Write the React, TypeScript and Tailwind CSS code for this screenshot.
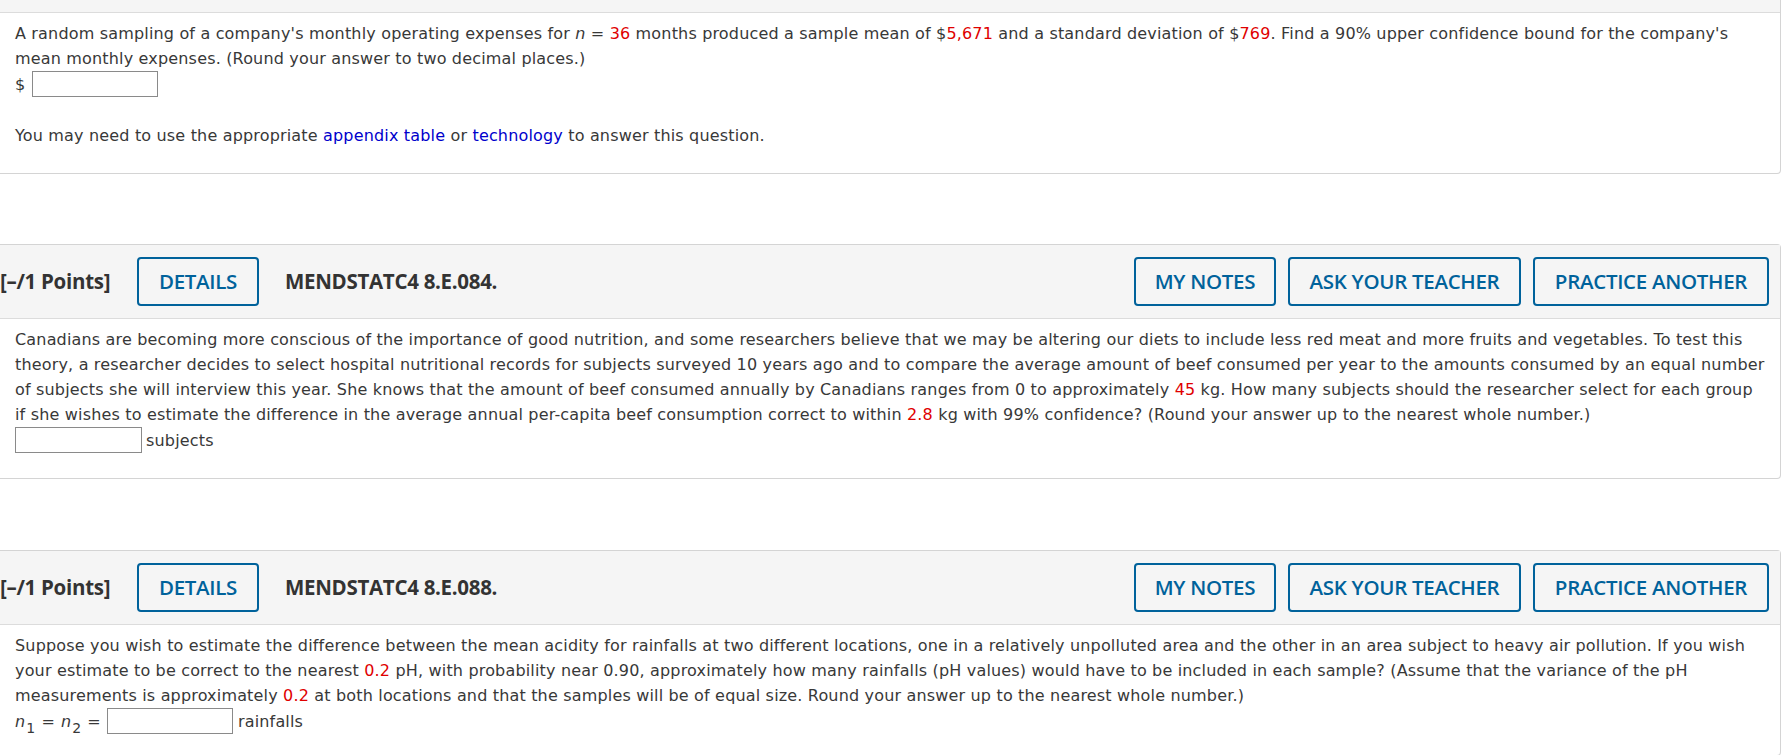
import type { ReactNode } from 'react'

const btn =
  'h-[49px] shrink-0 rounded-[4px] border-2 border-[#00629b] text-[20.5px] font-semibold text-[#00629b] tracking-[-0.3px]'

function Header({ code }: { code: string }) {
  return (
    <div className="flex h-[74px] items-center border-b border-[#dcdcdc] bg-[#f5f5f5] pr-[11px] font-['Open_Sans',sans-serif]">
      <span className="w-[137px] shrink-0 text-[20.5px] font-bold text-[#333] tracking-[-0.3px]">[–/1 Points]</span>
      <button className={btn + ' w-[122px]'}>DETAILS</button>
      <span className="ml-[26px] text-[20.5px] font-bold text-[#333] tracking-[-0.3px]">{code}</span>
      <div className="ml-auto flex gap-[12px]">
        <button className={btn + ' w-[142px]'}>MY NOTES</button>
        <button className={btn + ' w-[233px]'}>ASK YOUR TEACHER</button>
        <button className={btn + ' w-[236px]'}>PRACTICE ANOTHER</button>
      </div>
    </div>
  )
}

function Card({ code, children, className }: { code: string; children: ReactNode; className?: string }) {
  return (
    <div className={'w-[1781px] rounded-br-[4px] rounded-tr-[4px] border border-l-0 border-[#d4d4d4] ' + (className ?? '')}>
      <Header code={code} />
      <div className="whitespace-nowrap pl-[15px] pr-[20px] pt-[8px] font-['DejaVu_Sans',sans-serif] text-[16px] leading-[25px] tracking-[0.17px] text-[#383838]">
        {children}
      </div>
    </div>
  )
}

const Red = ({ children }: { children: ReactNode }) => <span className="text-[#e00000]">{children}</span>
const N = () => <i>n</i>

const Box = ({ w }: { w: string }) => (
  <span className={'inline-block h-[26px] shrink-0 border border-[#8a8a8a] bg-white ' + w} />
)

export default function App() {
  return (
    <div className="h-[755px] overflow-hidden bg-white">
      <Card code="MENDSTATC4 8.E.080." className="-mt-[62px]">
        <p>
          A random sampling of a company's monthly operating expenses for <N /> = <Red>36</Red> months produced a sample mean of
          $<Red>5,671</Red> and a standard deviation of $<Red>769</Red>. Find a 90% upper confidence bound for the company's
          <br />
          mean monthly expenses. (Round your answer to two decimal places.)
        </p>
        <div className="flex h-[26px] items-center gap-[7px]">
          <span>$</span>
          <Box w="w-[126px]" />
        </div>
        <p className="mt-[26px] pb-[25px]">
          You may need to use the appropriate <span className="text-[#0000cc]">appendix table</span> or{' '}
          <span className="text-[#0000cc]">technology</span> to answer this question.
        </p>
      </Card>

      <Card code="MENDSTATC4 8.E.084." className="mt-[70px]">
        <p>
          Canadians are becoming more conscious of the importance of good nutrition, and some researchers believe that we may be
          altering our diets to include less red meat and more fruits and vegetables. To test this
          <br />
          theory, a researcher decides to select hospital nutritional records for subjects surveyed 10 years ago and to compare the
          average amount of beef consumed per year to the amounts consumed by an equal number
          <br />
          of subjects she will interview this year. She knows that the amount of beef consumed annually by Canadians ranges from 0
          to approximately <Red>45</Red> kg. How many subjects should the researcher select for each group
          <br />
          if she wishes to estimate the difference in the average annual per-capita beef consumption correct to within{' '}
          <Red>2.8</Red> kg with 99% confidence? (Round your answer up to the nearest whole number.)
        </p>
        <div className="flex h-[26px] items-center gap-[4px]">
          <Box w="w-[127px]" />
          <span>subjects</span>
        </div>
        <div className="h-[25px]" />
      </Card>

      <Card code="MENDSTATC4 8.E.088." className="mt-[71px]">
        <p>
          Suppose you wish to estimate the difference between the mean acidity for rainfalls at two different locations, one in a
          relatively unpolluted area and the other in an area subject to heavy air pollution. If you wish
          <br />
          your estimate to be correct to the nearest <Red>0.2</Red> pH, with probability near 0.90, approximately how many
          rainfalls (pH values) would have to be included in each sample? (Assume that the variance of the pH
          <br />
          measurements is approximately <Red>0.2</Red> at both locations and that the samples will be of equal size. Round your
          answer up to the nearest whole number.)
        </p>
        <div className="flex h-[26px] items-center">
          <span className="flex items-baseline">
            <N />
            <span className="relative top-[6px] ml-[1px] text-[14px] leading-[14px]">1</span>
            <span className="ml-[6px]">=</span>
            <span className="ml-[6px]">
              <N />
            </span>
            <span className="relative top-[6px] ml-[1px] text-[14px] leading-[14px]">2</span>
            <span className="ml-[6px]">=</span>
          </span>
          <span className="ml-[6px] flex">
            <Box w="w-[126px]" />
          </span>
          <span className="ml-[5px]">rainfalls</span>
        </div>
        <div className="h-[21px]" />
      </Card>
    </div>
  )
}
